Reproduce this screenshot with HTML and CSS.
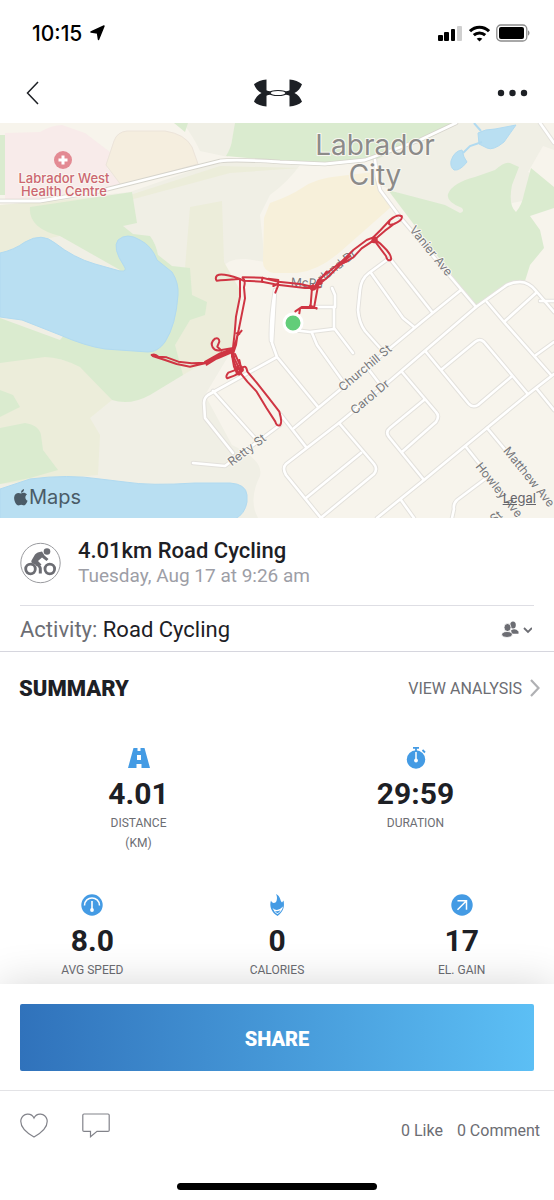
FILE: index.html
```html
<!DOCTYPE html>
<html lang="en">
<head>
    <meta charset="UTF-8">
    <meta name="viewport" content="width=device-width, initial-scale=1.0">
    <title>Road Cycling</title>
    <link rel="stylesheet" href="styles.css">
</head>
<body>
    <div class="status-bar">
        <div class="clock">
            <span>10:15</span>
            <svg width="15" height="16" viewBox="0 0 15 16"><path d="M14 1 8.500 14.500 7.500 8 1 7z" stroke="#000" stroke-width="1.500" stroke-linejoin="round"/></svg>
        </div>
        <div class="status-icons">
            <svg width="25" height="16" viewBox="0 0 25 16">
                <rect x="0" y="10" width="5" height="6" rx="1"/>
                <rect x="6" y="7" width="5" height="9" rx="1"/>
                <rect x="13" y="4" width="4" height="12" rx="1"/>
                <rect x="19" y="1" width="5" height="15" rx="1" fill="#cfcfcf"/>
            </svg>
            <svg width="21" height="17" viewBox="0 0 21 17" fill="none" stroke="#000" stroke-width="3">
                <path d="M1 6.200C6.300.9 14.700.9 20 6.200"/>
                <path d="M4.800 10.200c3.200-3 8.200-3 11.400 0"/>
                <path d="M10.500 16.500 7.700 13.700c1.600-1.300 4-1.300 5.600 0z" fill="#000" stroke="none"/>
            </svg>
            <svg width="34" height="18" viewBox="0 0 34 18">
                <rect x=".8" y="1" width="30" height="16" rx="4" fill="none" stroke="#8c8c8c" stroke-width="1.300"/>
                <rect x="3" y="3" width="25" height="12" rx="2"/>
                <path d="M32 6.500c2 .6 2 4.400 0 5z" fill="#8c8c8c"/>
            </svg>
        </div>
    </div>

    <header class="nav-bar">
        <button class="icon-btn" type="button" aria-label="Back">
            <svg width="13" height="24" viewBox="0 0 13 24"><path d="M12 1 1.500 12 12 23" fill="none" stroke="#1d2025" stroke-width="1.500"/></svg>
        </button>
        <svg class="brand" width="48" height="28" viewBox="0 0 48 28" fill="#1d2025">
            <path d="M12.500 .5v10.800c2.600 1.400 5.500 1.500 11.500 1.500s8.900-.1 11.500-1.500V.5c5 .3 9.500 2 12.500 4.800-1.400 4-4 7-7.500 8.700 3.500 1.800 6.100 4.700 7.500 8.700-3 2.800-7.500 4.500-12.500 4.800V16.800c-2.600-1.400-5.500-1.500-11.500-1.500s-8.900.1-11.500 1.500v10.700C7.500 27.200 3 25.500 0 22.700 1.400 18.700 4 15.800 7.500 14 4 12.300 1.400 9.300 0 5.300 3 2.500 7.500 .8 12.500 .5z"/>
            <ellipse cx="24" cy="14" rx="9" ry="3.100"/>
            <ellipse cx="24" cy="14" rx="7.300" ry="2" fill="#fff"/>
        </svg>
        <button class="icon-btn" type="button" aria-label="More">
            <svg width="32" height="8" viewBox="0 0 32 8" fill="#1d2025"><circle cx="4" cy="4" r="3.200"/><circle cx="15.500" cy="4" r="3.200"/><circle cx="27" cy="4" r="3.200"/></svg>
        </button>
    </header>

    <section class="map">
        <svg class="map-canvas" viewBox="0 123 554 395" preserveAspectRatio="xMidYMid slice">
            <rect y="123" width="554" height="395" fill="#f7f4ec"/>
            <!-- open land -->
            <path fill="#f0efe5" d="M0 205 130 192 220 161 300 165Q288 182 270 195L260 215 265 262 246 259Q228 258 222 268L240 290 232 350 205 395 232 445Q264 460 260 476 248 500 258 518H0z"/>
            <path fill="#f0efe5" d="M188 130Q196 142 200 151L228 157 236 123H182zM456 123 420 140 375 160 380 185 450 215 554 195V140L540 123z"/>
            <path fill="#f7f4ec" d="M543 146 528 172 554 187V150zM530 218 554 208V300L520 280z"/>
            <path fill="#ecedda" d="M0 205 130 195 220 166 300 168 230 173 130 200 60 236 40 240 0 255zM190 207 222 201 224 262 240 290 234 345 183 375 165 355 178 290 185 268zM0 360 45 355 80 365 112 400 90 418 100 435 98 475 0 484z"/>
            <!-- parks -->
            <path fill="#daebcf" d="M30 207 132 192 137 223 123 226 133 234 150 236Q156 244 158 255L172 266 190 268 192 295 207 302 205 315 190 320 175 345 183 375 150 395Q130 406 112 400L80 367Q60 357 45 357L0 363V318L60 340 120 270 60 236Q28 228 30 207z"/>
            <path fill="#daebcf" d="M0 390 13 395 20 407 0 417zM0 428 25 423Q39 425 41 435L43 450 58 470 30 478 0 484zM0 135 5 135V195H0z"/>
            <path fill="#daebcf" d="M174 123H188L185 132zM235 123H456L420 140 375 160 325 163 280 161 226 156Q231 148 232 140z"/>
            <path fill="#daebcf" d="M388 190 445 205 460 213Q465 212 462 208 446 202 448 194 452 183 475 177L495 170Q505 161 510 163L519 167 512 185Q508 205 516 212 522 205 524 194L531 168 554 187V208L530 216 540 230 544 248 530 265 525 281 500 288 475 306z"/>
            <!-- hospital, school and commercial blocks -->
            <path fill="#f8ebea" d="M5 133 40 132Q52 125 62 125L85 133 110 152 107 168 121 185 100 193 45 201 5 200z"/>
            <path fill="#f5eedf" stroke="#ece4da" d="M106 165 114 141Q117 132 127 131L165 131Q185 134 192 147L198 164 121 185z"/>
            <path fill="#f7f0da" d="M264 218 270 203Q290 196 302 188 316 178 340 176L374 172 380 190 391 207 340 252Q318 271 297 273L274 273Q262 271 263 260z"/>
            <!-- water -->
            <g fill="#b9dff2" stroke="#b1daf0" stroke-width="1">
                <path d="M0 253Q14 250 25 242 42 232 55 243 74 258 95 264L120 271Q128 272 124 266 112 248 118 240 127 232 140 240 152 246 157 260L172 272Q179 283 178 295 176 325 165 342 158 352 148 352L105 349Q85 346 60 335L22 320 0 317z"/>
                <path d="M0 489 30 479Q68 474 100 479L125 482Q150 486 195 483L230 483Q246 484 247 495V502Q245 514 235 519H0z"/>
                <path d="M478 133Q485 129 495 129L516 125 504 142Q493 151 487 148L479 144zM451 161Q454 151 462 150L464 157 467 162Q460 171 454 170 450 167 451 161z"/>
                <path fill="none" stroke-width="2" d="M463 153 470 146 482 142M474 123 481 131"/>
            </g>
            <!-- streets: outline first, white fill on top -->
            <defs>
                <g id="streets">
                    <path d="M375 160 377 178 380 190 400 217 476 307M432 312 391 260M388 259 369 273Q361 279 360 290L358 310Q359 323 365 331L381 349M371 273 403 318 414 327"/>
                    <path d="M554 312 536 291Q529 282 520 282 510 282 504 287L476 307 391 380 339 423 286 464Q282 468 286 475L321 518"/>
                    <path d="M461 290 424 320 294 428M487 302 504 322 551 375M504 322 536 293M540 301H554M536 355 554 342M540 123 554 143"/>
                    <path d="M554 374 527 395 487 428 424 480 377 518M536 388 554 410M426 352 469 404Q473 408 478 405L511 377M441 370 475 342Q480 338 484 342L527 393"/>
                    <path d="M402 372 436 412Q440 416 436 422L402 452M424 400 390 428Q385 432 389 437L424 480M339 423 374 464Q378 469 374 474L322 517M361 453 306 498"/>
                    <path d="M487 428 507 452M466 447 482 467M401 500 414 518M485 479 457 500Q453 504 454 509L452 518M369 370 379 383"/>
                    <path d="M275 290 272 343 277 357 318 407M277 357 208 395Q204 398 204 403L205 418 233 453M213 391 255 438M193 463 225 466 280 425M281 415 306 447M271 341Q270 320 275 290"/>
                    <path d="M315 307H334V328L353 353M332 288 335 295V307M293 330 310 332 334 329M312 333 317 345 342 380"/>
                </g>
                <path id="highway" d="M0 201H40L100 191 220 161Q235 159 280 162L325 164 365 160 420 140 456 123"/>
            </defs>
            <g fill="none" stroke-linejoin="round" stroke-linecap="round">
                <use href="#streets" stroke="#e3e1dc" stroke-width="4.500"/>
                <use href="#highway" stroke="#d6d4cc" stroke-width="4.500"/>
                <use href="#streets" stroke="#fff" stroke-width="2.600"/>
                <use href="#highway" stroke="#fff" stroke-width="2.800"/>
            </g>
            <!-- labels -->
            <g class="town-label"><text x="375" y="155">Labrador</text><text x="375" y="185">City</text></g>
            <circle cx="63" cy="160" r="9" fill="#e38a93"/>
            <path d="M63 155.500v9M58.500 160h9" stroke="#fff" stroke-width="3"/>
            <g class="place-label"><text x="64" y="183">Labrador West</text><text x="64" y="196">Health Centre</text></g>
            <g class="street-label">
                <text transform="translate(431 251) rotate(51)" y="4">Vanier Ave</text>
                <text transform="translate(365 368) rotate(-40)" y="4">Churchill St</text>
                <text transform="translate(370 397) rotate(-40)" y="4">Carol Dr</text>
                <text transform="translate(247 450) rotate(-37)" y="4">Retty St</text>
                <text transform="translate(529 477) rotate(51)" y="4">Matthew Ave</text>
                <text transform="translate(499 490) rotate(51)" y="4">Howley Ave</text>
                <text transform="translate(496 517) rotate(-38)" y="4">St</text>
                <text transform="translate(307 283) rotate(3)" y="4">McPa</text>
                <text transform="translate(337 266) rotate(-38)" y="4">rland Dr</text>
            </g>
            <!-- recorded ride, start point at the green dot -->
            <g class="route" transform="translate(140 200) scale(.3333)">
                <path d="M785 50Q775 40 750 60 740 80 762 72 790 60 785 48M750 60 722 90 700 112 680 120 640 150 610 180 570 212 535 240 524 262 480 252 415 245 367 233 308 232 M762 72 735 92 700 122 665 145 640 172 600 195 560 235 530 258"/>
                <path d="M700 115 720 130 740 150Q758 172 752 180 742 184 738 168L708 128Q692 122 700 112 712 112 710 122 705 130 695 125M610 180 630 168 605 190 620 185M560 215 535 245 550 240 525 258 545 250"/>
                <path d="M540 262 495 264 412 254 366 245 310 242 298 236Q245 218 232 226 224 234 230 242 250 240 298 237M367 233 366 246M385 236 415 240 414 258 406 278M400 258 412 252M520 255Q506 262 516 270 532 268 530 255"/>
                <path d="M516 264 512 316M534 258 522 324M485 324H530M510 316 530 326M466 334 485 321 512 320M478 340 480 326"/>
                <path d="M300 238 300 290 288 350 284 400 278 452 280 480 295 520M308 234Q318 240 312 262L315 295 306 340 296 390 284 440M305 392 292 408 288 435 276 470M290 400 298 402"/>
                <path d="M275 445 245 450Q225 455 218 442 210 428 225 416 238 412 238 425L232 440 245 452"/>
                <path d="M35 465Q45 460 55 470L80 472 115 485 155 490 200 488 230 470 275 450M38 468 75 480 110 492 150 500 195 490 240 472 280 455 M195 486 240 460 278 446M200 494 245 466 280 450M210 482 262 460M278 452 284 478 300 510"/>
                <path d="M275 460 282 500 292 522M285 462 302 500 296 522M300 505 265 518Q255 530 262 535 285 528 305 515 315 510 300 495 285 500 290 520 300 530 305 512L298 480"/>
                <path d="M305 505Q318 492 322 515L350 548 385 592 418 635Q428 668 420 676 410 680 406 665L380 625 350 575 322 545 298 515"/>
            </g>
            <circle cx="293" cy="323" r="9" fill="#62cd79" stroke="#fff" stroke-width="3"/>
        </svg>
        <div class="map-credit">
            <svg width="14" height="17" viewBox="0 0 14 17" fill="#4a5b67"><path d="M7 4.500C9 3.200 11.500 3.500 13 5.600c-2.400 1.600-2.100 4.900.6 6.200C12.500 14.700 11 17 9.300 16.300c-1.500-.7-2.600-.7-4.100 0C2.500 17.300-.4 12 .2 8 .7 4.200 4 3.200 7 4.500zM7 3.700C6.900 1.700 8.300.3 10 0c.2 2-1.200 3.600-3 3.700z"/></svg>
            <span>Maps</span>
        </div>
        <a class="map-legal" href="#">Legal</a>
    </section>

    <section class="workout">
        <div class="workout-title">
            <svg width="42" height="42" viewBox="0 0 42 42">
                <circle cx="20.500" cy="21" r="19.700" fill="none" stroke="#9b9ca0"/>
                <g fill="none" stroke="#6c6d73" stroke-width="2.800">
                    <circle cx="10.500" cy="27" r="4.800"/>
                    <circle cx="29.800" cy="27" r="4.800"/>
                    <path d="M20.300 31.500v-5q0-2.500-4.300-4.500" stroke-width="3"/>
                </g>
                <circle cx="27" cy="9.500" r="3.300" fill="#6c6d73"/>
                <path d="M22 9.500Q17 10 15 12.500L11.500 18.500Q10.500 21 14 22L19 24.500 21.500 22.500 18 19 22 15.500 26.500 19 28.500 17 24.500 13.500z" fill="#6c6d73"/>
            </svg>
            <div>
                <h1>4.01km Road Cycling</h1>
                <p>Tuesday, Aug 17 at 9:26 am</p>
            </div>
        </div>
        <div class="activity-row">
            <p>Activity: <span>Road Cycling</span></p>
            <button class="privacy-btn" type="button" aria-label="Privacy">
                <svg width="31" height="17" viewBox="0 0 31 17" fill="#6c6d73">
                    <ellipse cx="12" cy="4" rx="2.800" ry="3.500"/>
                    <path d="M10 9.500q4-3 7.500 1v2.200H11z"/>
                    <g stroke="#fff" stroke-width=".8"><ellipse cx="6.500" cy="6.500" rx="3.500" ry="4"/><path d="M.5 14Q1 10.500 6 10.500T11.500 14Q10 16.500 6 16.500T.5 14z"/></g>
                    <path d="m23 7 4 4 4-4" fill="none" stroke="#6c6d73" stroke-width="1.800"/>
                </svg>
            </button>
        </div>
    </section>

    <main class="summary">
        <div class="summary-head">
            <h2>SUMMARY</h2>
            <a href="#">VIEW ANALYSIS
                <svg width="10" height="18" viewBox="0 0 10 18"><path d="m1 1 7.500 8L1 17" fill="none" stroke="#b0b1b4" stroke-width="2.200"/></svg>
            </a>
        </div>
        <div class="metrics metrics-main">
            <div class="metric">
                <svg width="22" height="22" viewBox="0 0 22 22"><path fill="#449be4" d="M5.500 1H9.500v3h3V1h4L22 21h-8.500v-4h-5v4H0zM9 8v5h4V8z"/></svg>
                <strong>4.01</strong>
                <span>DISTANCE<br>(KM)</span>
            </div>
            <div class="metric">
                <svg width="22" height="22" viewBox="0 0 22 22">
                    <circle cx="11" cy="12.500" r="9.200" fill="#449be4"/>
                    <path d="M8 .8h6M11 0v4M17.500 3l2.500 2.500" stroke="#449be4" stroke-width="1.800"/>
                    <path d="M11 5v8" stroke="#fff" stroke-width="1.500"/>
                    <circle cx="11" cy="13.500" r="1.900" fill="#fff"/>
                </svg>
                <strong>29:59</strong>
                <span>DURATION</span>
            </div>
        </div>
        <div class="metrics">
            <div class="metric">
                <svg width="22" height="22" viewBox="0 0 22 22">
                    <circle cx="11" cy="11" r="10.700" fill="#449be4"/>
                    <path d="M3.500 11.500C3.500 1.500 18.500 1.500 18.500 11.500" fill="none" stroke="#fff" stroke-width="1.500"/>
                    <path d="M11 7v8" stroke="#fff" stroke-width="1.600"/>
                    <circle cx="11" cy="16" r="1.900" fill="#fff"/>
                </svg>
                <strong>8.0</strong>
                <span>AVG SPEED</span>
            </div>
            <div class="metric">
                <svg width="22" height="22" viewBox="0 0 22 22">
                    <path fill="#449be4" d="M10 0C15 2.500 13.500 6 16 8.500L17.500 6.500C19 13 17 18 11.500 22 5.500 18.500 3 12 5 6.500c.8 3.200 4.800 3 5.500.5C11 5 11.500 3 10 0z"/>
                    <path fill="#fff" d="M6.500 14q5 4.500 10.500-1.500-.8 4.500-5.500 7.700-3.500-2.200-5-6.200z"/>
                    <path fill="#449be4" d="M8.800 17q2.700.8 5.700-.8-1 1.800-3 3-1.500-.8-2.700-2.200z"/>
                </svg>
                <strong>0</strong>
                <span>CALORIES</span>
            </div>
            <div class="metric">
                <svg width="22" height="22" viewBox="0 0 22 22">
                    <circle cx="11" cy="11" r="10.700" fill="#449be4"/>
                    <path d="M6.500 6.800h9v9M15.500 6.800l-9 9" fill="none" stroke="#fff" stroke-width="1.500"/>
                </svg>
                <strong>17</strong>
                <span>EL. GAIN</span>
            </div>
        </div>
    </main>

    <footer>
        <div class="share-panel">
            <button class="share-btn" type="button">SHARE</button>
        </div>
        <div class="social">
            <button class="icon-btn" type="button" aria-label="Like">
                <svg width="28" height="25" viewBox="0 0 28 25"><path d="M14 5C11.500-.5 3-.5 1 6.500-.5 14 7 20 14 24 21 20 28.500 14 27 6.500 25-.5 16.500-.5 14 5z" fill="none" stroke="#82838a" stroke-width="1.200"/></svg>
            </button>
            <button class="icon-btn" type="button" aria-label="Comment">
                <svg width="28" height="25" viewBox="0 0 28 25"><path d="M2 1h24q1.200 0 1.200 1.200v15q0 1.200-1.200 1.200H15L8.500 23.800v-5.400H2q-1.200 0-1.200-1.200v-15Q.8 1 2 1z" fill="none" stroke="#82838a" stroke-width="1.200"/></svg>
            </button>
            <div class="counts">
                <a href="#">0 Like</a>
                <a href="#">0 Comment</a>
            </div>
        </div>
        <div class="home-bar"></div>
    </footer>
</body>
</html>
```
FILE: styles.css
```css
* {
    margin: 0;
    padding: 0;
    box-sizing: border-box;
}

body {
    display: flex;
    flex-direction: column;
    min-height: 100vh;
    background-color: #fff;
    color: #1d2025;
    font-family: Roboto, "Liberation Sans", sans-serif;
}

svg {
    display: block;
    flex-shrink: 0;
}

a {
    color: inherit;
    text-decoration: none;
}

button {
    border: none;
    background: none;
    font-family: inherit;
    cursor: pointer;
}

.status-bar {
    display: flex;
    justify-content: space-between;
    align-items: center;
    height: 66px;
    padding: 0 24px 0 32px;
}

.clock {
    display: flex;
    align-items: center;
    gap: 8px;
    color: #000;
    font-family: Inter, sans-serif;
    font-size: 21px;
    font-weight: 500;
}

.status-icons {
    display: flex;
    align-items: center;
    gap: 6px;
}

.nav-bar {
    display: grid;
    grid-template-columns: 1fr auto 1fr;
    align-items: center;
    height: 57px;
    padding: 0 25px 3px 26px;
}

.nav-bar .icon-btn:last-child {
    justify-self: end;
}

.nav-bar .icon-btn:first-child {
    justify-self: start;
}

.map {
    position: relative;
    aspect-ratio: 554 / 395;
    overflow: hidden;
}

.map-canvas {
    width: 100%;
    height: 100%;
    font-family: Inter, sans-serif;
    text-anchor: middle;
}

.map-canvas text {
    paint-order: stroke;
    stroke: #f9f7f1;
    stroke-width: 2px;
    stroke-linejoin: round;
}

.town-label {
    fill: #8c8b89;
    font-size: 28px;
}

.place-label {
    fill: #cc6670;
    font-size: 13px;
    font-weight: 500;
}

.street-label {
    fill: #77777b;
    font-size: 12px;
}

.route {
    fill: none;
    stroke: #cf3543;
    stroke-width: 6;
    stroke-linejoin: round;
    stroke-linecap: round;
}

.map-credit {
    position: absolute;
    left: 14px;
    bottom: 8px;
    display: flex;
    align-items: center;
    gap: 1px;
    color: #4a5b67;
    font-family: Inter, sans-serif;
    font-size: 20px;
    line-height: 26px;
}

.map-legal {
    position: absolute;
    right: 18px;
    bottom: 12px;
    color: #65656a;
    font-family: Inter, sans-serif;
    font-size: 13px;
    line-height: 16px;
    text-decoration: underline;
}

.workout {
    border-bottom: 1px solid #d6d6de;
}

.workout-title {
    display: flex;
    align-items: center;
    gap: 16px;
    margin: 0 20px;
    padding: 20px 0 17px;
    border-bottom: 1px solid #dedee4;
}

.workout-title h1 {
    font-size: 22px;
    font-weight: 500;
    line-height: 26px;
}

.workout-title p {
    color: #9d9ea6;
    font-size: 19px;
    line-height: 24px;
}

.activity-row {
    display: flex;
    justify-content: space-between;
    align-items: center;
    height: 45px;
    padding: 2px 22px 0 20px;
    color: #6c6d73;
    font-size: 22px;
}

.activity-row span {
    color: #1d2025;
}

.summary {
    flex: 1;
}

.summary-head {
    display: flex;
    justify-content: space-between;
    align-items: center;
    height: 72px;
    padding: 0 14px 0 19px;
}

.summary-head h2 {
    font-size: 22px;
    font-weight: 900;
}

.summary-head a {
    display: flex;
    align-items: center;
    gap: 8px;
    color: #6c6d73;
    font-size: 16px;
}

.metrics {
    display: flex;
}

.metrics-main {
    padding: 23px 0 41px;
}

.metric {
    flex: 1;
    display: flex;
    flex-direction: column;
    align-items: center;
    text-align: center;
}

.metric strong {
    margin: 9px 0 3px;
    font-size: 30px;
    font-weight: 700;
    line-height: 32px;
}

.metric span {
    color: #6c6d73;
    font-size: 12px;
    line-height: 20px;
}

footer {
    position: sticky;
    bottom: 0;
    background-color: #fff;
    box-shadow: 0 0 40px rgba(0, 0, 0, 0.16);
}

.share-panel {
    padding: 20px 20px 19px;
    border-bottom: 1px solid #e3e3e6;
}

.share-btn {
    width: 100%;
    height: 67px;
    padding-top: 2px;
    border-radius: 2px;
    background: linear-gradient(to right, #3072bb, #5cbff5);
    color: #fff;
    font-size: 20px;
    font-weight: 900;
}

.social {
    display: flex;
    align-items: center;
    gap: 34px;
    height: 68px;
    padding: 0 14px 0 20px;
}

.counts {
    display: flex;
    gap: 14px;
    margin: 10px 0 0 auto;
    color: #6c6d73;
    font-size: 16px;
}

.home-bar {
    width: 36%;
    height: 7px;
    margin: 24px auto 10px;
    border-radius: 4px;
    background-color: #000;
}
```
